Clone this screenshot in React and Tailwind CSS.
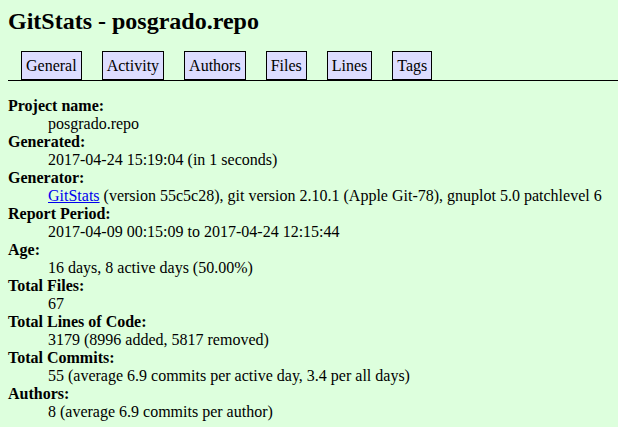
import React from 'react';

const tabs = ['General', 'Activity', 'Authors', 'Files', 'Lines', 'Tags'];

const stats = [
  { label: 'Project name', value: 'posgrado.repo' },
  { label: 'Generated', value: '2017-04-24 15:19:04 (in 1 seconds)' },
  {
    label: 'Generator',
    value: (
      <>
        <a href="#" className="text-[#0000ee] underline">GitStats</a> (version 55c5c28), git version 2.10.1 (Apple Git-78), gnuplot 5.0 patchlevel 6
      </>
    ),
  },
  { label: 'Report Period', value: '2017-04-09 00:15:09 to 2017-04-24 12:15:44' },
  { label: 'Age', value: '16 days, 8 active days (50.00%)' },
  { label: 'Total Files', value: '67' },
  { label: 'Total Lines of Code', value: '3179 (8996 added, 5817 removed)' },
  { label: 'Total Commits', value: '55 (average 6.9 commits per active day, 3.4 per all days)' },
  { label: 'Authors', value: '8 (average 6.9 commits per author)' },
];

export default function App() {
  return (
    <div className="min-h-screen bg-[#ddffdd] pl-2 pt-2 text-black font-['Liberation_Serif','Times_New_Roman',serif]">
      <h1 className="text-[24px] font-bold leading-[26px]">GitStats - posgrado.repo</h1>

      <div className="mt-[17px] flex gap-5 border-b border-black pl-[13px]">
        {tabs.map((tab) => (
          <a
            key={tab}
            href="#"
            className="flex h-[29px] items-center border border-black bg-[#ddddff] px-1 text-[16px] leading-[18px] text-black"
          >
            {tab}
          </a>
        ))}
      </div>

      <dl className="mt-4 text-[16px] leading-[18px]">
        {stats.map((s) => (
          <React.Fragment key={s.label}>
            <dt className="font-bold">{s.label}:</dt>
            <dd className="ml-10">{s.value}</dd>
          </React.Fragment>
        ))}
      </dl>
    </div>
  );
}
